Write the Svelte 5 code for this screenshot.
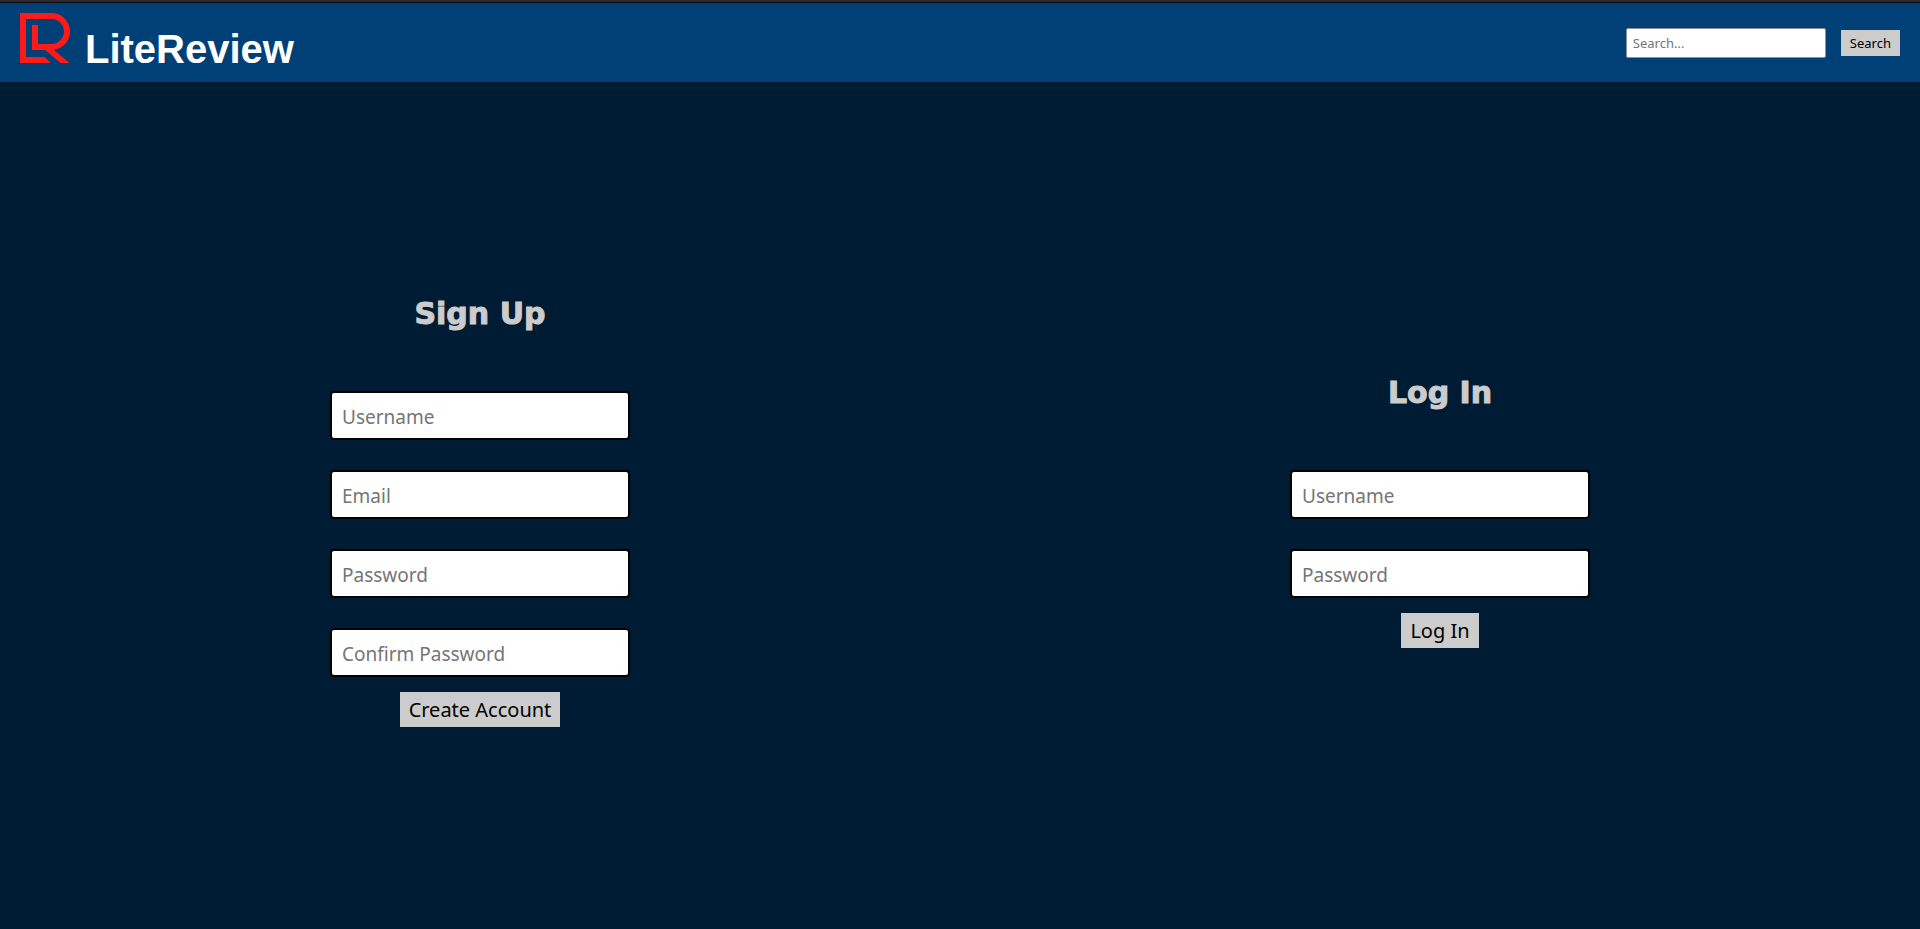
<script>
  const forms = [
    {
      id: 'signup',
      title: 'Sign Up',
      action: 'Create Account',
      fields: [
        { name: 'username', label: 'Username', type: 'text' },
        { name: 'email', label: 'Email', type: 'email' },
        { name: 'password', label: 'Password', type: 'password' },
        { name: 'confirm', label: 'Confirm Password', type: 'password' }
      ]
    },
    {
      id: 'login',
      title: 'Log In',
      action: 'Log In',
      fields: [
        { name: 'username', label: 'Username', type: 'text' },
        { name: 'password', label: 'Password', type: 'password' }
      ]
    }
  ];

  const stay = (event) => event.preventDefault();
</script>

<div class="page">
  <header>
    <a class="brand" href="#home">
      <svg class="logo" viewBox="0 0 50 50" aria-hidden="true">
        <path
          fill="none"
          stroke="currentColor"
          stroke-width="6"
          d="M24 47H3V3H31.5A15.5 15.5 0 0 1 31.5 34H15V12"
        />
        <path fill="currentColor" d="M23.5 44H24.5L31 50H23.5Z M24.5 36.5H33.5L49.5 50H40.5Z" />
      </svg>
      <span class="name">LiteReview</span>
    </a>
    <form class="search" onsubmit={stay}>
      <input type="search" aria-label="Search" placeholder="Search..." />
      <button type="submit">Search</button>
    </form>
  </header>

  <main>
    {#each forms as form}
      <form class="panel" aria-labelledby="{form.id}-title" onsubmit={stay}>
        <h2 id="{form.id}-title">{form.title}</h2>
        <div class="fields">
          {#each form.fields as field}
            <input
              type={field.type}
              name={field.name}
              aria-label={field.label}
              placeholder={field.label}
            />
          {/each}
        </div>
        <button type="submit">{form.action}</button>
      </form>
    {/each}
  </main>
</div>

<style>
  :global(body) {
    margin: 0;
    background: #001c34;
  }

  .page {
    display: flex;
    flex-direction: column;
    min-height: 100vh;
    font-family: Tahoma, 'Noto Sans', sans-serif;
  }

  header {
    display: flex;
    align-items: center;
    justify-content: space-between;
    box-sizing: border-box;
    height: 82px;
    padding: 2px 20px 0;
    background: #004077;
    border-top: 2px solid #2b2a33;
    box-shadow: inset 0 1px #0c0c0d;
  }

  .brand {
    display: flex;
    align-items: flex-start;
    gap: 15px;
    height: 60px;
    color: #fff;
    text-decoration: none;
  }

  .logo {
    width: 50px;
    height: 50px;
    color: #ff1a1a;
  }

  .name {
    padding-top: 13px;
    font: bold 40px/46px Arial, 'Liberation Sans', sans-serif;
  }

  .search {
    display: flex;
    align-items: center;
    gap: 15px;
  }

  input {
    box-sizing: border-box;
    font-family: inherit;
    color: #000;
    background: #fff;
  }

  input::placeholder {
    color: #757575;
    opacity: 1;
  }

  button {
    border: 0;
    border-radius: 0;
    font-family: inherit;
    color: #000;
    background: #ccc;
    cursor: pointer;
  }

  .search input {
    width: 200px;
    height: 30px;
    padding: 0 6px;
    border: 1px solid #8f8f9d;
    border-radius: 2px;
    font-size: 13px;
    appearance: none;
  }

  .search button {
    padding: 4px 9px;
    font-size: 13px;
    line-height: 18px;
  }

  main {
    flex: 1;
    display: grid;
    grid-template-columns: 1fr 1fr;
    align-items: center;
  }

  .panel {
    display: flex;
    flex-direction: column;
    align-items: center;
    padding: 22px 0 15px;
  }

  h2 {
    margin: 0 0 54px;
    font: bold 30px/46px 'DejaVu Sans', sans-serif;
    -webkit-text-stroke: 1px #ccc;
    color: #ccc;
  }

  .fields {
    display: flex;
    flex-direction: column;
    gap: 30px;
    margin-bottom: 15px;
  }

  .fields input {
    width: 300px;
    height: 49px;
    padding: 2px 10px 0;
    border: 2px solid #000;
    border-radius: 4px;
    font-size: 19px;
  }

  .panel button {
    padding: 4px 9px;
    font-size: 20px;
    line-height: 27px;
  }
</style>
